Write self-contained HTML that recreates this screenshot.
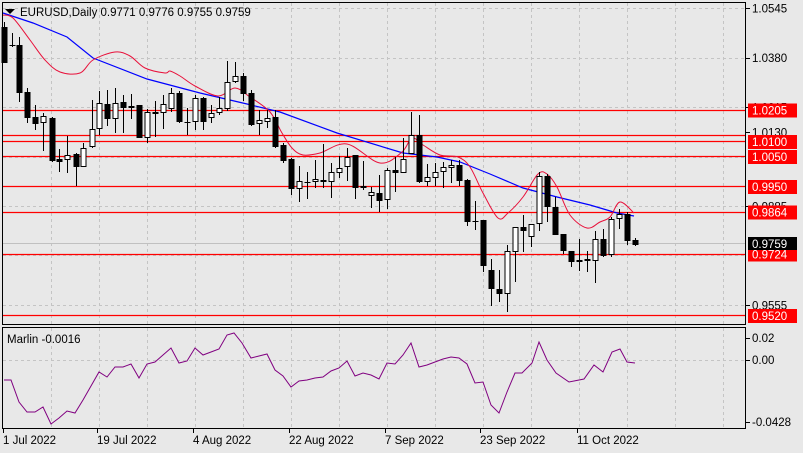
<!DOCTYPE html>
<html><head><meta charset="utf-8"><style>
html,body{margin:0;padding:0;background:#e8e8e8;width:803px;height:453px;overflow:hidden}
svg{display:block;font-family:"Liberation Sans",sans-serif}
</style></head><body>
<svg id="s" width="803" height="453" xmlns="http://www.w3.org/2000/svg">
<rect width="803" height="453" fill="#e8e8e8"/>
<g id="grid" stroke="#c4c4c4" stroke-dasharray="3,3" stroke-width="1"></g>
<g id="hl"></g>
<g id="ma"></g>
<g id="cd"></g>
<rect x="2.5" y="2.5" width="743" height="322" fill="none" stroke="#000"/>
<rect x="2.5" y="327.5" width="743" height="101" fill="none" stroke="#000"/>
<g id="ax" font-size="11.5" fill="#000"></g>
<polygon points="5,9 15,9 10,14" fill="#000"/>
<text x="20" y="16" font-size="11.5">EURUSD,Daily  0.9771 0.9776 0.9755 0.9759</text>
<text x="7" y="343" font-size="11.5">Marlin -0.0016</text>
</svg>
<script>
var NS="http://www.w3.org/2000/svg";
function el(p,t,a,txt){var e=document.createElementNS(NS,t);for(var k in a)e.setAttribute(k,a[k]);if(txt!=null)e.textContent=txt;document.getElementById(p).appendChild(e);return e;}
var vx=[51,99,147,195,243,291,339,387,435,483,531,579,627,675,723];
vx.forEach(function(x){el('grid','line',{x1:x+.5,y1:3,x2:x+.5,y2:324});el('grid','line',{x1:x+.5,y1:328,x2:x+.5,y2:428});});
[8,57.5,107,156.5,206,255,305].forEach(function(y){el('grid','line',{x1:3,y1:Math.round(y)+.5,x2:745,y2:Math.round(y)+.5});});
el('grid','line',{x1:3,y1:360.5,x2:745,y2:360.5});
el('hl','line',{x1:3,y1:243.5,x2:745,y2:243.5,stroke:'#c0c0c0'});
[110,135,141,156,186,212,254,315].forEach(function(y){el('hl','line',{x1:3,y1:y+.5,x2:745,y2:y+.5,stroke:'#ff0000','stroke-width':1.3});});
var blue=[[3,13],[33,23],[67,37],[93,58],[147,79],[200,93],[247,104],[280,112],[337,133],[403,153],[437,157],[460,162],[490,174],[523,188],[557,197],[590,205],[617,213],[634,216]];
var red=[[3,15],[13,18],[30,40],[45,60],[60,72],[80,73],[93,60],[115,52],[130,56],[145,68],[165,73],[170,71],[180,76],[195,86],[218,96],[235,88],[250,97],[270,112],[282,133],[292,148],[303,155],[320,153],[347,144],[380,163],[402,152],[412,138],[423,145],[440,155],[458,157],[470,167],[483,193],[498,218],[508,213],[523,197],[538,174],[547,174],[557,187],[570,215],[587,228],[600,222],[610,217],[620,202],[634,213]];
function pl(a){return a.map(function(p){return p.join(',')}).join(' ');}
function smooth(a){var d='M'+a[0][0]+','+a[0][1];for(var i=0;i<a.length-1;i++){var p0=a[Math.max(0,i-1)],p1=a[i],p2=a[i+1],p3=a[Math.min(a.length-1,i+2)];var c1x=p1[0]+(p2[0]-p0[0])/6,c1y=p1[1]+(p2[1]-p0[1])/6,c2x=p2[0]-(p3[0]-p1[0])/6,c2y=p2[1]-(p3[1]-p1[1])/6;d+=' C'+c1x.toFixed(1)+','+c1y.toFixed(1)+' '+c2x.toFixed(1)+','+c2y.toFixed(1)+' '+p2[0]+','+p2[1];}return d;}
el('ma','polyline',{points:pl(blue),fill:'none',stroke:'#0000ff','stroke-width':1.2});
el('ma','path',{d:smooth(red),fill:'none',stroke:'#e8103a','stroke-width':1});
var C=[[4,22,63,27,63,0],[12,33,47,45,46,0],[19,37,102,45,93,0],[27,88,123,92,118,0],[35,105,130,117,124,0],[43,113,151,116,123,1],[52,117,162,118,161,0],[59,149,172,159,162,0],[67,136,173,155,160,1],[76,153,186,154,167,0],[83,143,167,148,167,1],[92,100,148,129,147,1],[99,91,135,103,129,1],[107,90,126,104,119,0],[115,88,133,103,119,1],[123,95,133,102,108,0],[131,94,119,106,108,1],[139,105,138,105,138,0],[147,109,143,112,138,1],[155,101,137,112,113,1],[163,95,129,104,113,1],[171,88,112,93,109,1],[179,91,123,93,122,0],[187,108,135,122,123,0],[195,95,130,98,122,1],[203,97,130,98,122,0],[211,105,123,113,118,1],[219,97,115,108,113,1],[227,61,111,82,109,1],[235,62,83,76,82,1],[243,73,101,76,94,0],[251,90,126,93,125,0],[259,110,135,120,124,1],[267,110,128,118,122,1],[275,110,148,117,147,0],[283,143,163,145,161,0],[291,158,195,159,189,0],[299,166,202,181,189,1],[307,172,199,182,183,0],[315,160,188,179,182,1],[323,144,188,180,182,0],[331,163,198,172,182,1],[339,156,178,168,173,1],[347,148,181,157,167,1],[355,155,199,155,188,0],[363,161,190,186,188,1],[371,187,208,192,196,1],[379,175,212,193,201,0],[387,168,209,170,200,1],[395,157,192,170,173,0],[403,138,173,159,173,1],[411,112,154,135,154,1],[419,115,183,135,182,0],[427,164,186,177,182,1],[435,163,186,172,178,1],[443,162,188,167,172,1],[451,160,183,165,168,1],[459,160,186,165,181,0],[467,179,226,180,222,0],[475,201,230,221,222,0],[483,220,272,220,266,0],[491,259,306,270,289,0],[499,270,302,289,294,0],[507,245,312,251,294,1],[515,227,282,227,252,1],[523,215,252,227,231,0],[531,224,247,224,237,1],[539,172,231,176,224,1],[547,174,222,176,207,0],[555,197,235,207,235,0],[563,234,254,234,251,0],[571,251,267,251,262,0],[579,239,271,260,262,0],[587,251,272,259,261,0],[595,231,283,239,261,1],[603,229,257,239,256,0],[611,217,257,219,255,1],[619,209,229,214,219,1],[627,212,245,214,241,0],[635,238,246,240,245,0]];
C.forEach(function(c){
 var x=c[0];
 el('cd','line',{x1:x+.5,y1:c[1],x2:x+.5,y2:c[2],stroke:'#000'});
 var h=Math.max(1,c[4]-c[3]);
 if(c[5]) el('cd','rect',{x:x-2,y:c[3]+.5,width:5,height:Math.max(1,h-1),fill:'#fff',stroke:'#000'});
 else el('cd','rect',{x:x-2.5,y:c[3],width:6,height:h,fill:'#000'});
});
var M=[[4,380],[11,380],[19,402],[27,412],[35,412],[43,407],[51,424],[59,418],[67,411],[75,413],[83,400],[91,386],[99,372],[107,377],[115,367],[123,367],[131,364],[139,378],[147,364],[155,362],[163,355],[171,348],[179,363],[187,361],[195,348],[203,355],[211,352],[219,349],[227,335],[234,333],[242,343],[251,358],[259,356],[267,354],[275,370],[283,376],[291,387],[299,381],[307,380],[315,378],[323,377],[331,371],[339,368],[347,361],[355,376],[363,373],[371,375],[379,379],[387,363],[395,364],[403,355],[411,343],[419,367],[427,365],[435,362],[443,359],[451,357],[459,358],[467,364],[475,383],[483,382],[491,405],[499,413],[507,392],[515,373],[522,373],[532,363],[539,342],[547,360],[556,373],[569,382],[584,379],[594,365],[603,372],[612,352],[620,349],[627,362],[635,363]];
el('ma','polyline',{points:pl(M),fill:'none',stroke:'#800080','stroke-width':1});
[[8,'1.0545'],[57.5,'1.0380'],[305,'0.9555'],[206,'0.9885'],[107,'1.0215'],[132,'1.0130']].forEach(function(a){el('ax','line',{x1:746,y1:Math.round(a[0])+.5,x2:750,y2:Math.round(a[0])+.5,stroke:'#000'});el('ax','text',{x:752,y:a[0]+4.5},a[1]);});
[[110,'1.0205'],[141.5,'1.0100'],[156.5,'1.0050'],[186.5,'0.9950'],[212,'0.9864'],[254,'0.9724'],[315.5,'0.9520']].forEach(function(a){el('ax','rect',{x:748,y:a[0]-6.5,width:49,height:14,fill:'#ff0000'});el('ax','text',{x:752,y:a[0]+4.5,fill:'#fff'},a[1]);});
el('ax','rect',{x:748,y:237,width:49,height:13,fill:'#000'});el('ax','text',{x:752,y:248,fill:'#fff'},'0.9759');
[[338,'0.02'],[360,'0.00'],[422,'-0.0428']].forEach(function(a){el('ax','line',{x1:746,y1:a[0]+.5,x2:750,y2:a[0]+.5,stroke:'#000'});el('ax','text',{x:752,y:a[0]+4},a[1]);});
[[4,'1 Jul 2022'],[98,'19 Jul 2022'],[194,'4 Aug 2022'],[290,'22 Aug 2022'],[386,'7 Sep 2022'],[481,'23 Sep 2022'],[578,'11 Oct 2022']].forEach(function(a){el('ax','line',{x1:a[0]-.5,y1:429,x2:a[0]-.5,y2:433,stroke:'#000'});el('ax','text',{x:a[0]-1,y:444},a[1]);});
</script>
</body></html>
